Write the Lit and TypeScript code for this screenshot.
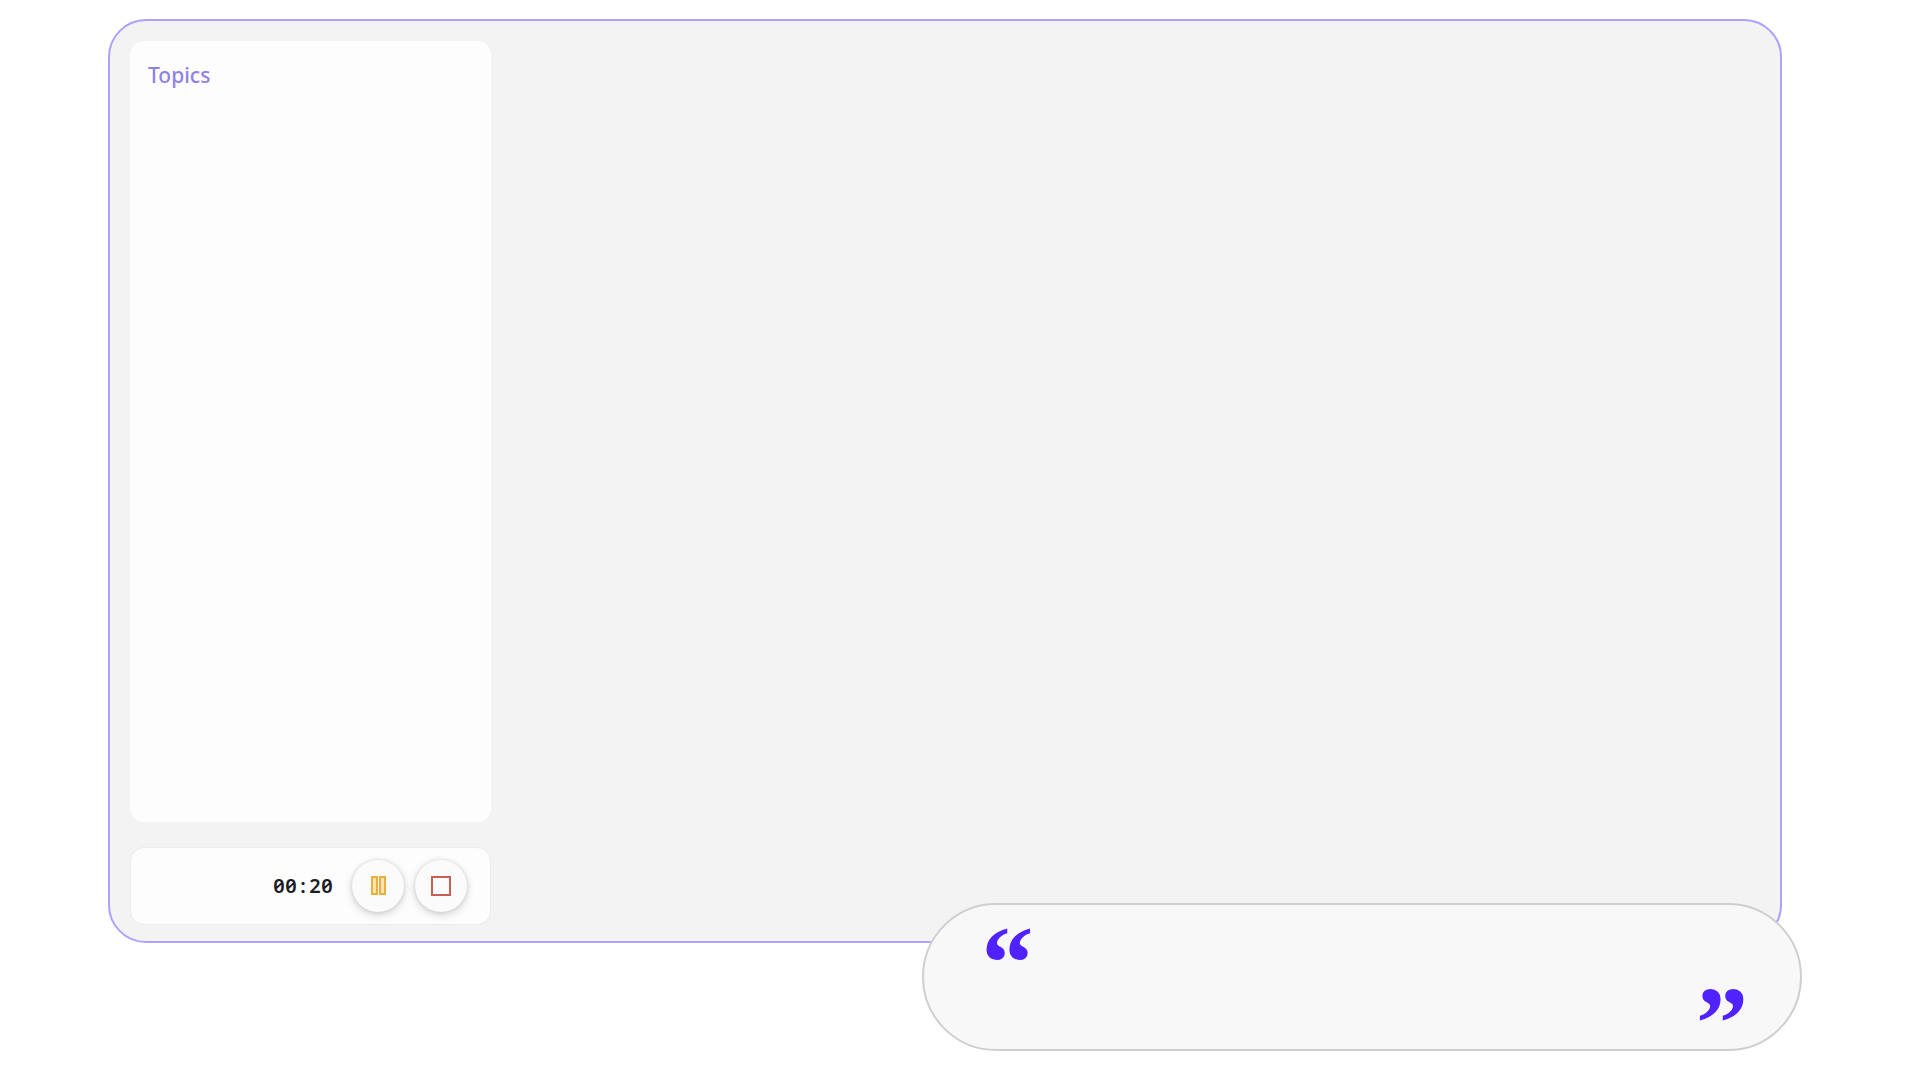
import { LitElement, html, css } from "lit";
import { customElement, state } from "lit/decorators.js";

@customElement("app-root")
export class AppRoot extends LitElement {
  static styles = css`
    :host {
      display: block;
      background: #ffffff;
      font-family: "Noto Sans", "Open Sans", sans-serif;
    }
    .stage {
      position: relative;
      box-sizing: border-box;
      display: flex;
      min-height: 100vh;
      padding: 19px 138px 137px 108px;
    }
    .panel {
      flex: 1;
      display: flex;
      box-sizing: border-box;
      padding: 20px 20px 16px;
      border: 2px solid #b0a0ff;
      border-radius: 38px;
      background: #f3f3f3;
    }
    .sidebar {
      flex: 0 0 361px;
      display: flex;
      flex-direction: column;
      gap: 25px;
    }
    .topics {
      flex: 1;
      padding: 20px 18px;
      border-radius: 14px;
      background: #fdfdfd;
    }
    .title {
      margin: 0;
      font-size: 21px;
      line-height: 28px;
      font-weight: 500;
      color: #8f82e6;
    }
    .recorder {
      display: flex;
      align-items: center;
      justify-content: flex-end;
      gap: 11px;
      padding: 12px 23px 12px 18px;
      border: 1px solid #ebebeb;
      border-radius: 14px;
      background: #fdfdfd;
    }
    .time {
      margin-right: 8px;
      display: flex;
      font-size: 20px;
      line-height: 28px;
      font-weight: 600;
      font-feature-settings: "zero", "tnum";
      color: #1c1c24;
    }
    .digit {
      width: 12px;
      text-align: center;
    }
    .round {
      display: grid;
      place-items: center;
      width: 52px;
      height: 52px;
      padding: 0;
      border: 0;
      border-radius: 50%;
      background: #fbfbfb;
      box-shadow: 0 3px 8px rgba(0, 0, 0, 0.16), 0 0 4px rgba(0, 0, 0, 0.12);
      cursor: pointer;
    }
    .quote {
      position: absolute;
      left: 48%;
      right: 118px;
      bottom: 29px;
      box-sizing: border-box;
      display: flex;
      justify-content: space-between;
      height: 148px;
      margin: 0;
      padding: 32px 52px 0 58px;
      border: 2px solid #cfcfcf;
      border-radius: 74px;
      background: #f8f8f8;
    }
    .mark {
      font-family: "Liberation Serif", serif;
      font-size: 104px;
      line-height: 52px;
      font-weight: 700;
      color: #4f22ff;
    }
    .close {
      align-self: flex-end;
    }
  `;

  @state() private seconds = 20;

  private get clock() {
    const pad = (n: number) => String(n).padStart(2, "0");
    return `${pad(Math.floor(this.seconds / 60))}:${pad(this.seconds % 60)}`;
  }

  render() {
    return html`
      <main class="stage">
        <section class="panel">
          <aside class="sidebar">
            <section class="topics"><h2 class="title">Topics</h2></section>
            <div class="recorder">
              <div class="time" role="timer">${[...this.clock].map((c) => html`<span class="digit">${c}</span>`)}</div>
              <button class="round" type="button" aria-label="Pause">
                <svg width="20" height="20" viewBox="0 0 20 20" fill="#f8e4b4" stroke="#eeae3c" stroke-width="2">
                  <rect x="4" y="1" width="5" height="17" />
                  <rect x="12" y="1" width="5" height="17" />
                </svg>
              </button>
              <button class="round" type="button" aria-label="Stop">
                <svg width="20" height="20" viewBox="0 0 20 20" fill="none" stroke="#c76054" stroke-width="2">
                  <rect x="1" y="1" width="18" height="18" />
                </svg>
              </button>
            </div>
          </aside>
        </section>
        <blockquote class="quote">
          <span class="mark">“</span>
          <span class="mark close">”</span>
        </blockquote>
      </main>
    `;
  }
}
